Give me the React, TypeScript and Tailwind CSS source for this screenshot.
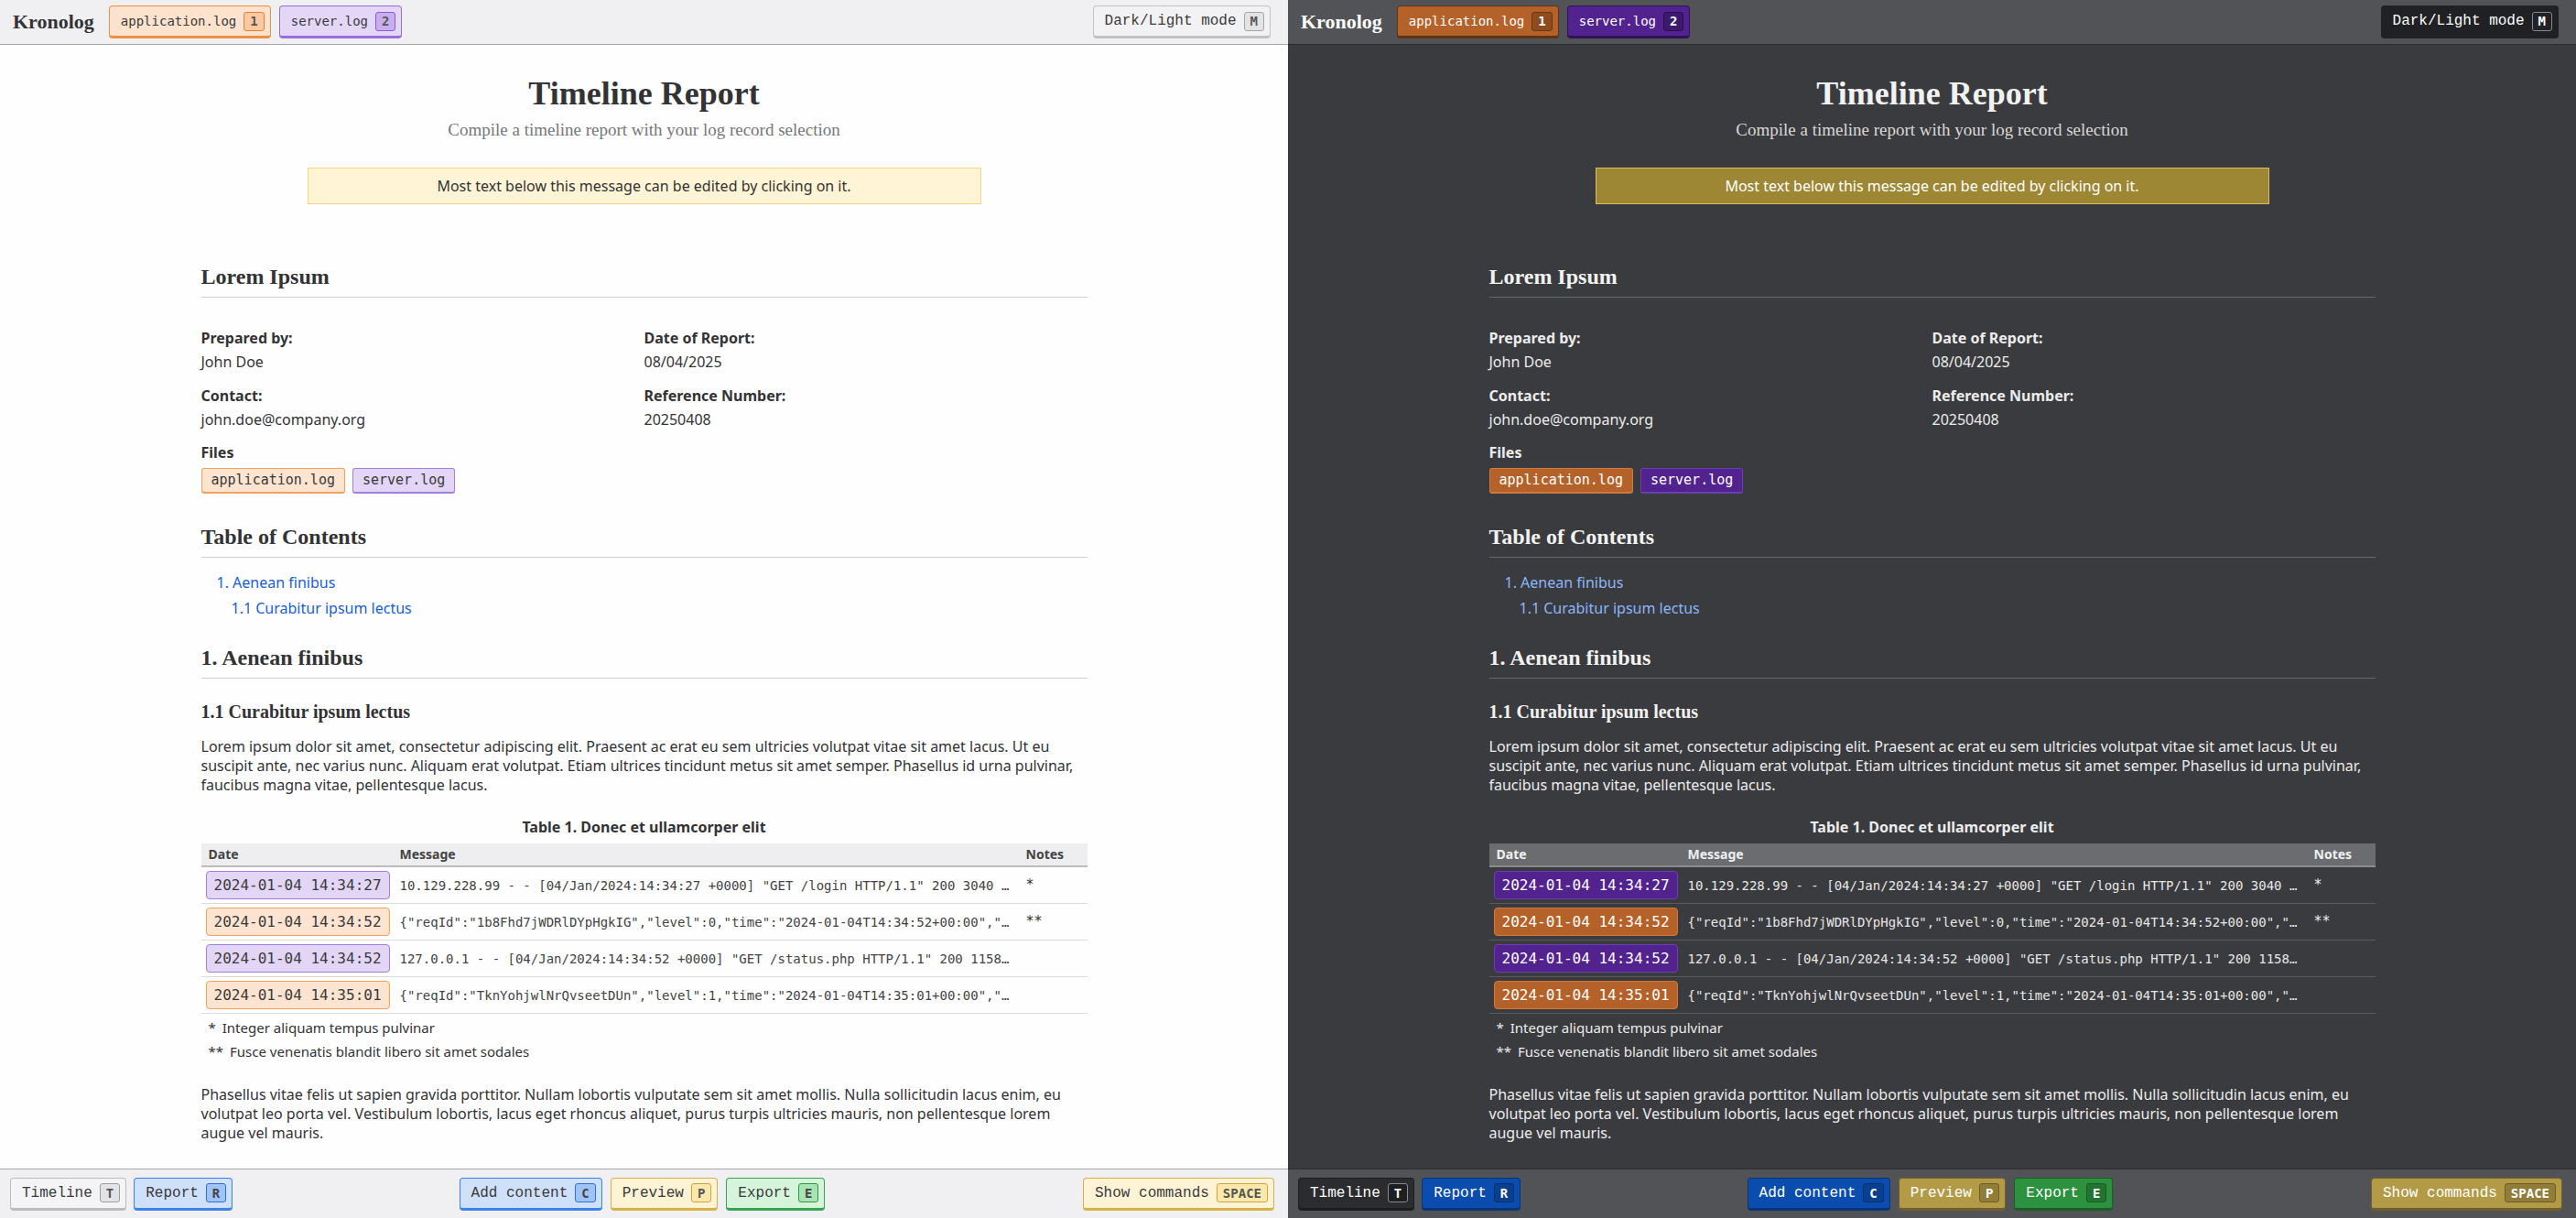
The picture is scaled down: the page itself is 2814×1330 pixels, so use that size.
import React from "react";

type VariantName = "neutral" | "toggle" | "blue" | "yellow" | "green" | "orange" | "purple";
type VStyle = { btn: string; kbd: string };

const V: Record<"light" | "dark", Record<VariantName, VStyle>> = {
  light: {
    neutral: { btn: "bg-[#f4f4f6] border-[#bcbcc0] text-[#3a3a3a]", kbd: "bg-[#e3e3e5] border-[#9d9da1] text-[#555]" },
    toggle: { btn: "bg-[#f2f2f4] border-[#c2c2c6] text-[#3a3a3a]", kbd: "bg-[#e3e3e5] border-[#a5a5a9] text-[#555]" },
    blue: { btn: "bg-[#cfe0fb] border-[#3d82ec] text-[#3a3a3a]", kbd: "bg-[#9fc3f7] border-[#2f6fdc] text-[#444]" },
    yellow: { btn: "bg-[#fef4d5] border-[#d8b048] text-[#3a3a3a]", kbd: "bg-[#fde8ab] border-[#cda53d] text-[#555]" },
    green: { btn: "bg-[#d6f4da] border-[#37a451] text-[#3a3a3a]", kbd: "bg-[#a8e4b3] border-[#2c9846] text-[#444]" },
    orange: { btn: "bg-[#fde3cd] border-[#ef9040] text-[#3a3a3a]", kbd: "bg-[#fbc8a0] border-[#e0823a] text-[#555]" },
    purple: { btn: "bg-[#e3d6f6] border-[#9a6ddc] text-[#3a3a3a]", kbd: "bg-[#c7afee] border-[#8c5bd8] text-[#555]" },
  },
  dark: {
    neutral: { btn: "bg-[#2b2c2f] border-[#1c1d1f] text-white", kbd: "bg-[#1e1f21] border-[#8a8a8e] text-white" },
    toggle: { btn: "bg-[#202124] border-[#202124] text-white", kbd: "bg-[#202124] border-[#8a8a8e] text-white" },
    blue: { btn: "bg-[#0b4daf] border-[#083577] text-white", kbd: "bg-[#093f8f] border-[#07306c] text-white" },
    yellow: { btn: "bg-[#b39a47] border-[#6f5f2a] text-white", kbd: "bg-[#917c38] border-[#6e5d27] text-white" },
    green: { btn: "bg-[#2d923f] border-[#1b5d27] text-white", kbd: "bg-[#237432] border-[#195a25] text-white" },
    orange: { btn: "bg-[#b5622a] border-[#5e3416] text-white", kbd: "bg-[#8e4b1d] border-[#6a3612] text-white" },
    purple: { btn: "bg-[#52238f] border-[#2d1457] text-white", kbd: "bg-[#3e1a6e] border-[#2a1050] text-white" },
  },
};

function Kbd({ cls, children }: { cls: string; children: React.ReactNode }) {
  return (
    <span
      className={`ml-2 inline-flex h-[21px] min-w-[22px] items-center justify-center rounded-[3px] border px-[6px] font-['DejaVu_Sans_Mono',monospace] text-[14px] font-bold leading-none ${cls}`}
    >
      {children}
    </span>
  );
}

function Btn({
  dark,
  variant,
  label,
  k,
  small,
}: {
  dark: boolean;
  variant: VariantName;
  label: string;
  k: string;
  small?: boolean;
}) {
  const s = V[dark ? "dark" : "light"][variant];
  return (
    <div className={`flex h-[36px] items-center rounded-[4px] border border-b-[3px] pl-3 pr-[6px] ${s.btn}`}>
      <span
        className={
          small
            ? "font-['DejaVu_Sans_Mono',monospace] text-[14px] leading-[20px]"
            : "font-['Liberation_Mono',monospace] text-[16px] leading-[22px]"
        }
      >
        {label}
      </span>
      <Kbd cls={s.kbd}>{k}</Kbd>
    </div>
  );
}

const rows = [
  {
    date: "2024-01-04 14:34:27",
    c: "purple",
    msg: '10.129.228.99 - - [04/Jan/2024:14:34:27 +0000] "GET /login HTTP/1.1" 200 3040 "-" "Mozilla/5.0 (X11; Linux x86_64)"',
    note: "*",
  },
  {
    date: "2024-01-04 14:34:52",
    c: "orange",
    msg: '{"reqId":"1b8Fhd7jWDRlDYpHgkIG","level":0,"time":"2024-01-04T14:34:52+00:00","remoteAddr":"10.129.228.99"}',
    note: "**",
  },
  {
    date: "2024-01-04 14:34:52",
    c: "purple",
    msg: '127.0.0.1 - - [04/Jan/2024:14:34:52 +0000] "GET /status.php HTTP/1.1" 200 1158 "-" "Mozilla/5.0"',
    note: "",
  },
  {
    date: "2024-01-04 14:35:01",
    c: "orange",
    msg: '{"reqId":"TknYohjwlNrQvseetDUn","level":1,"time":"2024-01-04T14:35:01+00:00","remoteAddr":"10.129.228.99"}',
    note: "",
  },
];

function Pane({ dark }: { dark: boolean }) {
  const serif = "font-['Liberation_Serif',serif] font-bold";
  const heading = dark ? "text-[#f2f2f2]" : "text-[#333336]";
  const h2 = `${serif} ${heading} text-[24px] leading-[32px] pb-[6px] border-b ${dark ? "border-[#6a6b6e]" : "border-[#d0d0d2]"}`;
  const link = dark ? "text-[#8cb6f8]" : "text-[#1a5fd6]";
  const badgePurple = dark ? "bg-[#52238f] border-[#6b3fb0] text-white" : "bg-[#e2d5f6] border-[#a47de0] text-[#3a3a3a]";
  const badgeOrange = dark ? "bg-[#b5622a] border-[#cf7a3c] text-white" : "bg-[#fde4d0] border-[#f3a05a] text-[#3a3a3a]";

  return (
    <div
      className={`flex h-[1330px] w-[1407px] shrink-0 flex-col overflow-hidden font-['Noto_Sans',sans-serif] ${
        dark ? "bg-[#3a3b3e] text-[#ececec]" : "bg-[#fefefe] text-[#333336]"
      }`}
    >
      {/* Header */}
      <header
        className={`flex h-[49px] shrink-0 items-center border-b pl-[14px] pr-[19px] ${
          dark ? "border-[#2c2d2f] bg-[#525357]" : "border-[#a6a6a8] bg-[#f0f0f2]"
        }`}
      >
        <span className={`font-['Liberation_Serif',serif] text-[22px] font-bold leading-none ${dark ? "text-white" : "text-[#333336]"}`}>
          Kronolog
        </span>
        <div className="ml-4 flex items-center gap-[9px]">
          <Btn dark={dark} variant="orange" label="application.log" k="1" small />
          <Btn dark={dark} variant="purple" label="server.log" k="2" small />
        </div>
        <div className="ml-auto">
          <Btn dark={dark} variant="toggle" label="Dark/Light mode" k="M" />
        </div>
      </header>

      {/* Main */}
      <main className="min-h-0 flex-1 overflow-hidden">
        <div className="mx-auto w-[968px] pt-[31px]">
          <h1 className={`${serif} ${heading} text-center text-[36px] leading-[44px]`}>Timeline Report</h1>
          <p
            className={`mt-[6px] text-center font-['Liberation_Serif',serif] text-[19px] leading-[24px] ${
              dark ? "text-[#d8d8d8]" : "text-[#77777a]"
            }`}
          >
            Compile a timeline report with your log record selection
          </p>
          <div
            className={`mx-auto mt-[29px] w-[736px] border py-2 text-center text-[16px] leading-[22px] ${
              dark ? "border-[#dcc055] bg-[#9d8734] text-white" : "border-[#f6d97a] bg-[#fff4d6] text-[#333]"
            }`}
          >
            Most text below this message can be edited by clicking on it.
          </div>

          <h2 className={`mt-[63px] ${h2}`}>Lorem Ipsum</h2>

          <div className="mt-[33px] grid grid-cols-2 gap-y-[15px] text-[16px] leading-[22px]">
            <div>
              <div className="font-bold">Prepared by:</div>
              <div className="mt-[4px]">John Doe</div>
            </div>
            <div>
              <div className="font-bold">Date of Report:</div>
              <div className="mt-[4px]">08/04/2025</div>
            </div>
            <div>
              <div className="font-bold">Contact:</div>
              <div className="mt-[4px]">john.doe@company.org</div>
            </div>
            <div>
              <div className="font-bold">Reference Number:</div>
              <div className="mt-[4px]">20250408</div>
            </div>
          </div>

          <div className="mt-[14px] text-[16px] font-bold leading-[22px]">Files</div>
          <div className="mt-[6px] flex gap-2">
            <span
              className={`rounded-[3px] border border-b-2 px-[10px] py-[2px] font-['DejaVu_Sans_Mono',monospace] text-[15px] leading-[21px] ${badgeOrange}`}
            >
              application.log
            </span>
            <span
              className={`rounded-[3px] border border-b-2 px-[10px] py-[2px] font-['DejaVu_Sans_Mono',monospace] text-[15px] leading-[21px] ${badgePurple}`}
            >
              server.log
            </span>
          </div>

          <h2 className={`mt-[31px] ${h2}`}>Table of Contents</h2>
          <div className={`mt-[16px] flex flex-col gap-[6px] text-[16px] leading-[22px] ${link}`}>
            <div className="pl-[17px]">1. Aenean finibus</div>
            <div className="pl-[33px]">1.1 Curabitur ipsum lectus</div>
          </div>

          <h2 className={`mt-[27px] ${h2}`}>1. Aenean finibus</h2>
          <h3 className={`mt-[22px] ${serif} ${heading} text-[20px] leading-[28px]`}>1.1 Curabitur ipsum lectus</h3>
          <p className="mt-[14px] text-[16px] leading-[21px]">
            Lorem ipsum dolor sit amet, consectetur adipiscing elit. Praesent ac erat eu sem ultricies volutpat vitae sit
            amet lacus. Ut eu suscipit ante, nec varius nunc. Aliquam erat volutpat. Etiam ultrices tincidunt metus sit
            amet semper. Phasellus id urna pulvinar, faucibus magna vitae, pellentesque lacus.
          </p>

          <div className="mt-[24px] text-center text-[16px] font-bold leading-[22px]">
            Table 1. Donec et ullamcorper elit
          </div>
          <table className="mt-[7px] w-full table-fixed border-collapse">
            <colgroup>
              <col className="w-[212px]" />
              <col />
              <col className="w-[73px]" />
            </colgroup>
            <thead>
              <tr
                className={`border-b-2 text-left text-[14px] font-bold leading-[22px] ${
                  dark ? "border-[#8a8b8e] bg-[#6b6c70] text-[#f0f0f0]" : "border-[#bcbcbf] bg-[#eeeef0] text-[#444]"
                }`}
              >
                <th className="py-[1px] pl-[8px]">Date</th>
                <th className="py-[1px] pl-[5px]">Message</th>
                <th className="py-[1px] pl-[6px]">Notes</th>
              </tr>
            </thead>
            <tbody>
              {rows.map((r, i) => (
                <tr key={i} className={`border-b ${dark ? "border-[#5a5b5e]" : "border-[#dcdcde]"}`}>
                  <td className="px-[5px] py-1">
                    <span
                      className={`inline-block rounded-[4px] border px-2 py-[4px] font-['DejaVu_Sans_Mono',monospace] text-[16px] leading-[21px] ${
                        r.c === "purple" ? badgePurple : badgeOrange
                      }`}
                    >
                      {r.date}
                    </span>
                  </td>
                  <td
                    className={`overflow-hidden text-ellipsis whitespace-nowrap px-[5px] py-1 font-['DejaVu_Sans_Mono',monospace] text-[14px] leading-[20px] ${
                      dark ? "text-[#e6e6e6]" : "text-[#444]"
                    }`}
                  >
                    {r.msg}
                  </td>
                  <td className="py-1 pl-[6px] font-['DejaVu_Sans_Mono',monospace] text-[15px]">{r.note}</td>
                </tr>
              ))}
            </tbody>
          </table>
          <div className="mt-[4px] pl-[8px] text-[15px] leading-[22px]">
            <span>*</span>
            <span className="ml-[7px]">Integer aliquam tempus pulvinar</span>
          </div>
          <div className="mt-[4px] pl-[8px] text-[15px] leading-[22px]">
            <span>**</span>
            <span className="ml-[7px]">Fusce venenatis blandit libero sit amet sodales</span>
          </div>

          <p className="mt-[26px] text-[16px] leading-[21px]">
            Phasellus vitae felis ut sapien gravida porttitor. Nullam lobortis vulputate sem sit amet mollis. Nulla
            sollicitudin lacus enim, eu volutpat leo porta vel. Vestibulum lobortis, lacus eget rhoncus aliquet, purus
            turpis ultricies mauris, non pellentesque lorem augue vel mauris.
          </p>
        </div>
      </main>

      {/* Footer */}
      <footer
        className={`grid h-[54px] shrink-0 grid-cols-[1fr_auto_1fr] items-center border-t pl-[11px] pr-[15px] ${
          dark ? "border-[#2c2d2f] bg-[#525357]" : "border-[#a6a6a8] bg-[#f0f0f2]"
        }`}
      >
        <div className="flex items-center gap-2">
          <Btn dark={dark} variant="neutral" label="Timeline" k="T" />
          <Btn dark={dark} variant="blue" label="Report" k="R" />
        </div>
        <div className="flex items-center gap-[9px]">
          <Btn dark={dark} variant="blue" label="Add content" k="C" />
          <Btn dark={dark} variant="yellow" label="Preview" k="P" />
          <Btn dark={dark} variant="green" label="Export" k="E" />
        </div>
        <div className="flex justify-end">
          <Btn dark={dark} variant="yellow" label="Show commands" k="SPACE" />
        </div>
      </footer>
    </div>
  );
}

export default function App() {
  return (
    <div className="flex h-[1330px] w-[2814px] overflow-hidden">
      <Pane dark={false} />
      <Pane dark={true} />
    </div>
  );
}
